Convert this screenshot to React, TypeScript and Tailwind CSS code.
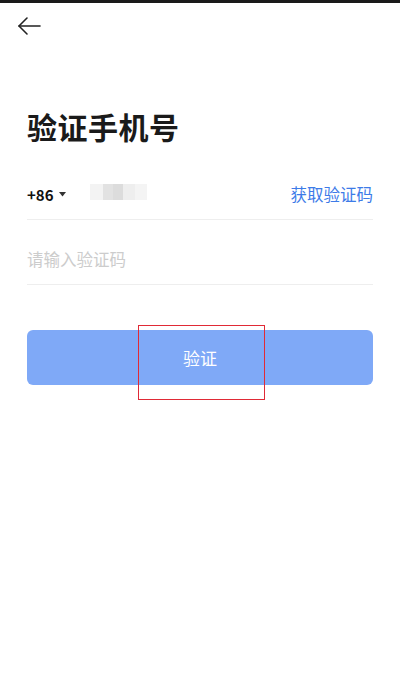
import React from "react";

export default function App() {
  const font = { fontFamily: '"Noto Sans CJK SC", "Noto Sans", sans-serif' };
  return (
    <div className="relative w-[400px] h-[686px] bg-white overflow-hidden" style={font}>
      <div className="h-[3px] bg-[#1a1a1a]" />
      <div className="pl-[17px] pt-[13px] h-[24px]">
        <svg width="24" height="20" viewBox="0 0 24 20" fill="none" stroke="#222" strokeWidth="1.6" strokeLinecap="round" strokeLinejoin="round">
          <path d="M23 10H2" />
          <path d="M10 2L2 10L10 18" />
        </svg>
      </div>
      <div className="px-[27px]">
        <h1 className="mt-[79px] text-[30px] leading-[40px] font-bold text-[#1a1a1a] tracking-[0.5px]">验证手机号</h1>
        <div className="mt-[40px] flex items-center h-[34px] pb-[16px] border-b border-[#eeeeee]">
          <div className="flex items-center h-full">
            <span className="text-[15px] font-bold text-[#111] leading-none">+86</span>
            <svg className="ml-[5px]" width="7" height="5" viewBox="0 0 7 5"><path d="M0 0H7L3.5 4.5Z" fill="#333" /></svg>
            <div className="ml-[24px] flex h-[16px] -mt-[6px]">
              <div className="w-[13px] bg-[#f3f3f3]" />
              <div className="w-[10px] bg-[#e2e2e2]" />
              <div className="w-[10px] bg-[#dcdcdc]" />
              <div className="w-[12px] bg-[#eeeeee]" />
              <div className="w-[12px] bg-[#f4f4f4]" />
            </div>
          </div>
          <span className="ml-auto text-[16.5px] text-[#3d7be8] leading-none">获取验证码</span>
        </div>
        <div className="mt-[22px] h-[43px] border-b border-[#eeeeee] flex items-start">
          <span className="text-[16.5px] text-[#cccccc] leading-[22px] mt-[6px]">请输入验证码</span>
        </div>
        <button className="mt-[45px] w-full h-[55px] rounded-[6px] bg-[#7fa9f7] text-white text-[17px]">验证</button>
      </div>
      <div className="absolute left-[138px] top-[325px] w-[127px] h-[75px] border-[1.5px] border-[#e02a36]" />
    </div>
  );
}
